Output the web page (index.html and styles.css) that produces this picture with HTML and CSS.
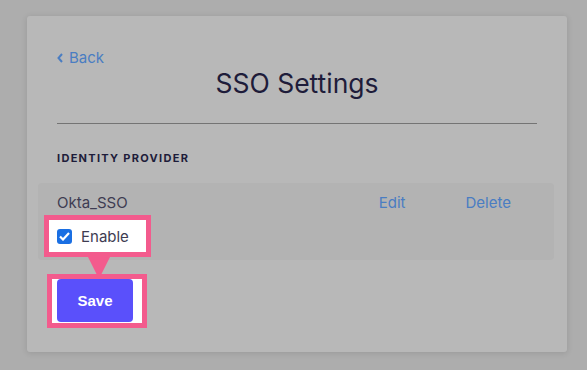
FILE: index.html
```html
<!DOCTYPE html>
<html lang="en">
<head>
<meta charset="utf-8">
<title>SSO Settings</title>
<link rel="stylesheet" href="styles.css">
</head>
<body>
<div class="card">
  <a class="back" href="#"><svg class="chev" width="6" height="10" viewBox="0 0 6 10"><polyline points="5,1 1.5,5 5,9" fill="none" stroke="currentColor" stroke-width="2"/></svg>Back</a>
  <h1 class="title">SSO Settings</h1>
  <hr class="rule">
  <div class="section-label">IDENTITY PROVIDER</div>
  <div class="provider">
    <div class="provider-line">
      <span class="provider-name">Okta_SSO</span>
      <a class="action" href="#">Edit</a>
      <a class="action" href="#">Delete</a>
    </div>
    <label class="highlight enable">
      <span class="check"><svg width="11" height="9" viewBox="0 0 11 9"><polyline points="1,4.5 4,7.5 10,1" fill="none" stroke="#fff" stroke-width="2.2"/></svg></span>
      <span class="enable-text">Enable</span>
    </label>
  </div>
  <div class="highlight save-wrap">
    <button class="save">Save</button>
  </div>
</div>
</body>
</html>
```

FILE: styles.css
```css
html, body {
  margin: 0;
  padding: 0;
}
body {
  background: #adadad;
  width: 587px;
  height: 370px;
  padding: 16px 0 0 27px;
  box-sizing: border-box;
  font-family: Inter, "Noto Sans", sans-serif;
}
.card {
  width: 540px;
  box-sizing: border-box;
  background: #b8b8b8;
  border-radius: 3px;
  box-shadow: 0 1px 6px rgba(0, 0, 0, 0.12);
  padding: 33px 30px 24px 30px;
}
.back {
  display: flex;
  align-items: center;
  gap: 6px;
  width: max-content;
  font-size: 15px;
  line-height: 17px;
  color: #4a7dc2;
  text-decoration: none;
}
.title {
  margin: 2px 0 0 0;
  text-align: center;
  font-size: 26.5px;
  line-height: 30px;
  font-weight: 400;
  color: #1e1c3a;
}
.rule {
  margin: 25px 0 0 0;
  border: 0;
  border-top: 1px solid #747474;
  height: 0;
}
.section-label {
  margin-top: 27px;
  font-size: 11px;
  line-height: 15px;
  font-weight: 700;
  letter-spacing: 1.3px;
  color: #1e1c3a;
}
.provider {
  margin: 17px -17px 0 -19px;
  background: #b3b3b3;
  border-radius: 4px;
  padding: 11px 43px 3px 19px;
}
.provider-line {
  display: flex;
  align-items: center;
  font-size: 15px;
  line-height: 18px;
}
.provider-name {
  flex: 1;
  color: #3e3c52;
}
.action {
  color: #4a7dc2;
  text-decoration: none;
}
.action + .action {
  margin-left: 60px;
}
.highlight {
  position: relative;
  background: #fff;
  border: 5px solid #f35b8d;
  width: max-content;
}
.enable {
  margin: 3px 0 0 -13px;
  display: flex;
  align-items: center;
  width: 89px;
  height: 32px;
  padding-left: 8px;
}
.enable::after {
  content: "";
  position: absolute;
  left: 39px;
  top: calc(100% + 5px);
  border-left: 11px solid transparent;
  border-right: 11px solid transparent;
  border-top: 22px solid #f35b8d;
  z-index: 2;
}
.check {
  width: 15px;
  height: 15px;
  border-radius: 3px;
  background: #1a6fe3;
  display: flex;
  align-items: center;
  justify-content: center;
}
.enable-text {
  margin-left: 9px;
  font-size: 15px;
  color: #3e3c52;
}
.save-wrap {
  margin: 14px 0 0 -10px;
  padding: 0 9px 1px 5px;
}
.save {
  display: block;
  width: 76px;
  height: 43px;
  border: 0;
  border-radius: 4px;
  background: #5a50fb;
  color: #fff;
  font-family: "Liberation Sans", Arial, sans-serif;
  font-weight: 700;
  font-size: 15px;
}
```
